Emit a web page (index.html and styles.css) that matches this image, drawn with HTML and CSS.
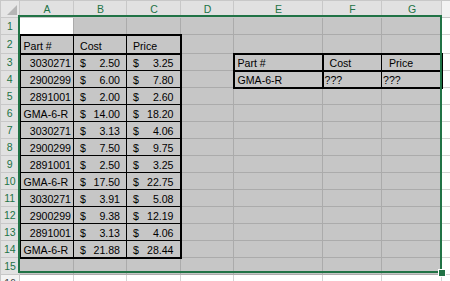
FILE: index.html
```html
<!DOCTYPE html>
<html>
<head>
<meta charset="utf-8">
<link rel="stylesheet" href="styles.css">
</head>
<body>
<div class="sheet">
<table class="grid">
<colgroup>
<col class="c-rh"><col class="c-a"><col class="c-b"><col class="c-c"><col class="c-d"><col class="c-e"><col class="c-f"><col class="c-g"><col class="c-h">
</colgroup>
<tr class="r-head">
<td class="corner"><svg class="tri" width="19" height="16" viewBox="0 0 19 16"><polygon points="16,4 16,14 6,14" fill="#b5b5b5"/></svg></td>
<td class="ch on">A</td><td class="ch on">B</td><td class="ch on">C</td><td class="ch on">D</td><td class="ch on">E</td><td class="ch on">F</td><td class="ch on">G</td><td class="ch"></td>
</tr>
<tr class="r">
<td class="rh on">1</td><td class="act"></td><td class="sel"></td><td class="sel"></td><td class="sel"></td><td class="sel"></td><td class="sel"></td><td class="sel"></td><td></td>
</tr>
<tr class="r r2">
<td class="rh on">2</td>
<td class="sel t hd lft">Part #</td><td class="sel t hd"><span class="ht">Cost</span></td><td class="sel t hd rgt"><span class="ht">Price</span></td>
<td class="sel"></td><td class="sel"></td><td class="sel"></td><td class="sel"></td><td></td>
</tr>
<tr class="r">
<td class="rh on">3</td>
<td class="sel t lft num">3030271</td><td class="sel t"><div class="acct"><span>$</span><span>2.50</span></div></td><td class="sel t rgt"><div class="acct"><span>$</span><span>3.25</span></div></td>
<td class="sel"></td><td class="sel u u-top u-l">Part #</td><td class="sel u u-top u-m"><span class="ht2">Cost</span></td><td class="sel u u-top u-r"><span class="ht3">Price</span></td><td></td>
</tr>
<tr class="r">
<td class="rh on">4</td>
<td class="sel t lft num">2900299</td><td class="sel t"><div class="acct"><span>$</span><span>6.00</span></div></td><td class="sel t rgt"><div class="acct"><span>$</span><span>7.80</span></div></td>
<td class="sel"></td><td class="sel u u-bot u-l">GMA-6-R</td><td class="sel u u-bot u-m q">???</td><td class="sel u u-bot u-r q">???</td><td></td>
</tr>
<tr class="r">
<td class="rh on">5</td>
<td class="sel t lft num">2891001</td><td class="sel t"><div class="acct"><span>$</span><span>2.00</span></div></td><td class="sel t rgt"><div class="acct"><span>$</span><span>2.60</span></div></td>
<td class="sel"></td><td class="sel"></td><td class="sel"></td><td class="sel"></td><td></td>
</tr>
<tr class="r">
<td class="rh on">6</td>
<td class="sel t lft">GMA-6-R</td><td class="sel t"><div class="acct"><span>$</span><span>14.00</span></div></td><td class="sel t rgt"><div class="acct"><span>$</span><span>18.20</span></div></td>
<td class="sel"></td><td class="sel"></td><td class="sel"></td><td class="sel"></td><td></td>
</tr>
<tr class="r">
<td class="rh on">7</td>
<td class="sel t lft num">3030271</td><td class="sel t"><div class="acct"><span>$</span><span>3.13</span></div></td><td class="sel t rgt"><div class="acct"><span>$</span><span>4.06</span></div></td>
<td class="sel"></td><td class="sel"></td><td class="sel"></td><td class="sel"></td><td></td>
</tr>
<tr class="r">
<td class="rh on">8</td>
<td class="sel t lft num">2900299</td><td class="sel t"><div class="acct"><span>$</span><span>7.50</span></div></td><td class="sel t rgt"><div class="acct"><span>$</span><span>9.75</span></div></td>
<td class="sel"></td><td class="sel"></td><td class="sel"></td><td class="sel"></td><td></td>
</tr>
<tr class="r">
<td class="rh on">9</td>
<td class="sel t lft num">2891001</td><td class="sel t"><div class="acct"><span>$</span><span>2.50</span></div></td><td class="sel t rgt"><div class="acct"><span>$</span><span>3.25</span></div></td>
<td class="sel"></td><td class="sel"></td><td class="sel"></td><td class="sel"></td><td></td>
</tr>
<tr class="r">
<td class="rh on">10</td>
<td class="sel t lft">GMA-6-R</td><td class="sel t"><div class="acct"><span>$</span><span>17.50</span></div></td><td class="sel t rgt"><div class="acct"><span>$</span><span>22.75</span></div></td>
<td class="sel"></td><td class="sel"></td><td class="sel"></td><td class="sel"></td><td></td>
</tr>
<tr class="r">
<td class="rh on">11</td>
<td class="sel t lft num">3030271</td><td class="sel t"><div class="acct"><span>$</span><span>3.91</span></div></td><td class="sel t rgt"><div class="acct"><span>$</span><span>5.08</span></div></td>
<td class="sel"></td><td class="sel"></td><td class="sel"></td><td class="sel"></td><td></td>
</tr>
<tr class="r">
<td class="rh on">12</td>
<td class="sel t lft num">2900299</td><td class="sel t"><div class="acct"><span>$</span><span>9.38</span></div></td><td class="sel t rgt"><div class="acct"><span>$</span><span>12.19</span></div></td>
<td class="sel"></td><td class="sel"></td><td class="sel"></td><td class="sel"></td><td></td>
</tr>
<tr class="r">
<td class="rh on">13</td>
<td class="sel t lft num">2891001</td><td class="sel t"><div class="acct"><span>$</span><span>3.13</span></div></td><td class="sel t rgt"><div class="acct"><span>$</span><span>4.06</span></div></td>
<td class="sel"></td><td class="sel"></td><td class="sel"></td><td class="sel"></td><td></td>
</tr>
<tr class="r">
<td class="rh on">14</td>
<td class="sel t lft bot">GMA-6-R</td><td class="sel t bot"><div class="acct"><span>$</span><span>21.88</span></div></td><td class="sel t rgt bot"><div class="acct"><span>$</span><span>28.44</span></div></td>
<td class="sel"></td><td class="sel"></td><td class="sel"></td><td class="sel"></td><td></td>
</tr>
<tr class="r">
<td class="rh on">15</td><td class="sel"></td><td class="sel"></td><td class="sel"></td><td class="sel"></td><td class="sel"></td><td class="sel"></td><td class="sel"></td><td></td>
</tr>
<tr class="r">
<td class="rh">16</td><td></td><td></td><td></td><td></td><td></td><td></td><td></td><td></td>
</tr>
</table>
<div class="selection"></div>
<div class="handle"></div>
</div>
</body>
</html>
```

FILE: styles.css
```css
html, body {
  margin: 0;
  padding: 0;
  background: #ffffff;
}
body {
  overflow: hidden;
  font-family: "Liberation Sans", Arial, sans-serif;
}
.sheet {
  position: relative;
  width: 450px;
  height: 281px;
  overflow: hidden;
}
.grid {
  border-collapse: collapse;
  table-layout: fixed;
  width: 450px;
  font-size: 10.6px;
  color: #000;
}
.c-rh { width: 19px; }
.c-a { width: 54px; }
.c-b { width: 53px; }
.c-c { width: 54px; }
.c-d { width: 53px; }
.c-e { width: 89px; }
.c-f { width: 59px; }
.c-g { width: 60px; }
.c-h { width: 9px; }

.grid td {
  padding: 0 2px 0 3px;
  border: 1px solid #d4d4d4;
  white-space: nowrap;
  overflow: hidden;
  vertical-align: bottom;
  line-height: 14px;
  box-sizing: border-box;
}
.r-head { height: 16px; }
.r { height: 17px; }
.r2 { height: 19px; }

.corner {
  position: relative;
  background: #e6e6e6;
  border-color: #c8c8c8 !important;
}
.tri {
  display: block;
}
.grid td.corner { padding: 0; vertical-align: top; }

.grid td.ch {
  background: #f3f3f3;
  border-color: #c8c8c8;
  text-align: center;
  color: #444;
  font-size: 10.5px;
  vertical-align: middle;
}
.grid td.ch.on {
  background: #e1e1e1;
  color: #217346;
}
.grid td.rh {
  background: #f3f3f3;
  border-color: #c8c8c8;
  text-align: center;
  color: #444;
  font-size: 10.5px;
  padding: 0;
  vertical-align: middle;
}
.grid td.rh.on {
  background: #e1e1e1;
  color: #217346;
}

.grid td.sel {
  background: #c6c6c6;
  border-color: #ababab;
}
.grid td.act {
  background: #ffffff;
  border-color: #ababab;
}

/* table 1 */
.grid td.t {
  border: 1px solid #000;
}
.grid td.hd {
  border-top: 2px solid #000;
  border-bottom: 2px solid #000;
}
.grid td.lft { border-left: 2px solid #000; }
.grid td.rgt { border-right: 2px solid #000; }
.grid td.bot { border-bottom: 2px solid #000; }
.grid td.num { text-align: right; }
.ht { padding-left: 3px; }

.acct {
  display: flex;
  justify-content: space-between;
  padding: 0 4px 0 3px;
}

/* table 2 */
.grid td.u { border: 2px solid #000; }
.grid td.u-m { border-right: 1px solid #000; }
.grid td.u-r { border-left: 1px solid #000; }
.ht2 { padding-left: 3px; }
.ht3 { padding-left: 4px; }
.grid td.q { padding-left: 1px; }

.selection {
  position: absolute;
  left: 18px;
  top: 15px;
  width: 424px;
  height: 258px;
  border: 2px solid #217346;
  box-sizing: border-box;
  pointer-events: none;
}
.handle {
  position: absolute;
  left: 438px;
  top: 269px;
  width: 6px;
  height: 6px;
  background: #217346;
  border: 1px solid #ffffff;
  box-sizing: content-box;
}
```
